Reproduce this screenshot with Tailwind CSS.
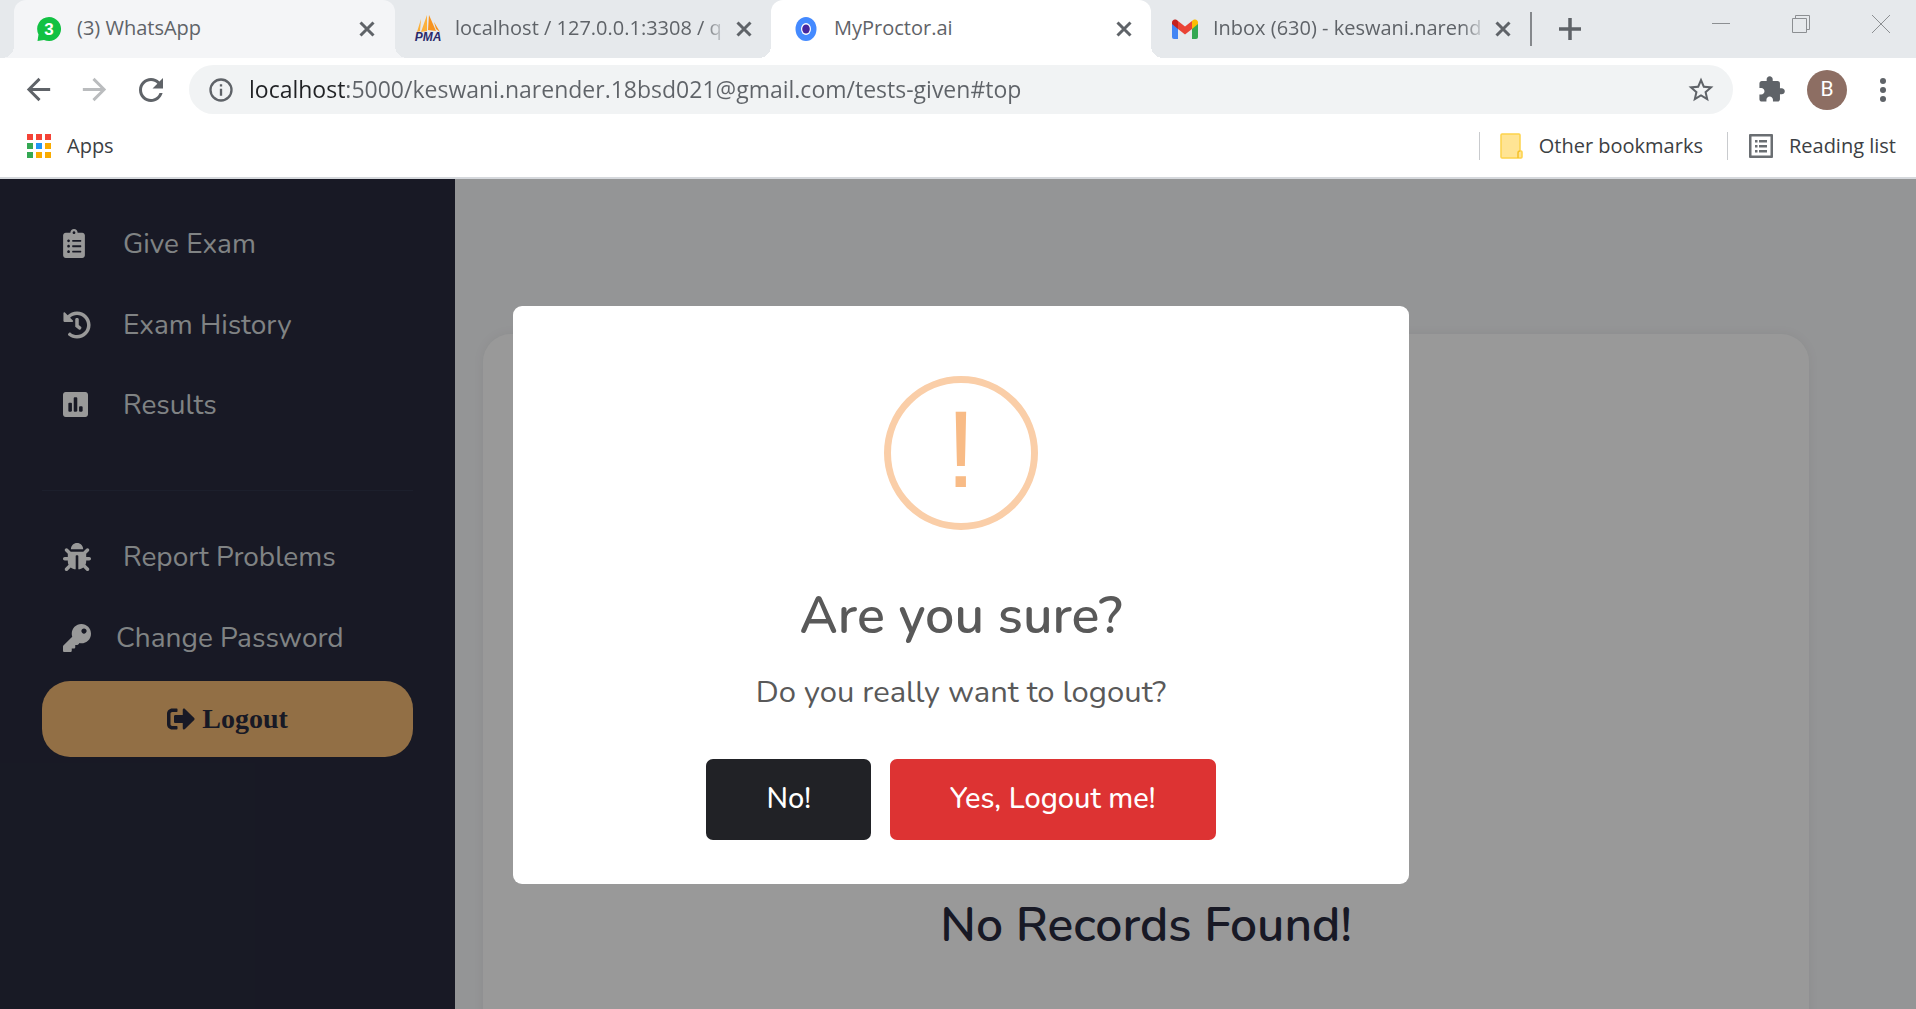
<!DOCTYPE html>
<html lang="en">
<head>
<meta charset="utf-8">
<meta name="viewport" content="width=device-width, initial-scale=1">
<title>MyProctor.ai</title>
<script src="https://cdn.jsdelivr.net/npm/@tailwindcss/browser@4"></script>
</head>
<body class="flex h-screen flex-col overflow-hidden bg-white font-['Nunito','Lato',sans-serif]">

<!-- Browser chrome -->
<header class="shrink-0 border-b-2 border-[#d5d8dc] font-['Segoe_UI','Open_Sans',sans-serif] text-[#5f6368]">

  <!-- Tab strip -->
  <div class="flex h-[58px] bg-[#e6e9ec] pl-[14px]">
    <div class="flex min-w-0 flex-1 text-[20px]">
      <div class="relative flex min-w-0 flex-[1_1_3px] items-center rounded-t-xl bg-[#f4f5f7] pr-[20px] pl-[22px] before:absolute before:bottom-0 before:-left-3 before:size-3 before:bg-[radial-gradient(circle_at_0_0,transparent_12px,#f4f5f7_12px)] after:absolute after:-right-3 after:bottom-0 after:size-3 after:bg-[radial-gradient(circle_at_100%_0,transparent_12px,#f4f5f7_12px)]">
        <span class="w-[41px] shrink-0">
          <svg class="h-[26px] w-[26px]" viewBox="0 0 26 26"><path fill="#12c143" d="M13 1a12 12 0 1 1-5 22.900L1.500 25l1-6.500A12 12 0 0 1 13 1z"/><text x="13" y="19" text-anchor="middle" font-family="Liberation Sans" font-weight="700" font-size="17" fill="#fff">3</text></svg>
        </span>
        <span class="min-w-0 flex-1 overflow-hidden pb-0.5 whitespace-nowrap">(3) WhatsApp</span>
        <button class="ml-4 shrink-0" aria-label="Close tab"><svg class="size-4" viewBox="0 0 16 16" fill="none" stroke="#5f6368" stroke-width="3"><path d="M1.500 1.500l13 13M14.500 1.500l-13 13"/></svg></button>
      </div>
      <div class="flex min-w-0 flex-[1_1_3px] items-center pr-[19px] pl-[18px]">
        <span class="w-[42px] shrink-0">
          <svg class="h-[30px] w-[30px]" viewBox="0 0 30 30"><path fill="#fbb03b" d="M8 5L4 18l3-1zM14 1v16l-6 1z"/><path fill="#f7931e" d="M16 1l7 16-8-1zM21 8l6 10-4-3z"/><text x="15" y="27" text-anchor="middle" font-family="Liberation Sans" font-weight="700" font-style="italic" font-size="12" fill="#2b2a6b">PMA</text></svg>
        </span>
        <span class="min-w-0 flex-1 overflow-hidden pb-0.5 whitespace-nowrap [mask-image:linear-gradient(to_right,black_calc(100%-26px),transparent)]">localhost / 127.0.0.1:3308 / q</span>
        <button class="ml-2 shrink-0" aria-label="Close tab"><svg class="size-4" viewBox="0 0 16 16" fill="none" stroke="#5f6368" stroke-width="3"><path d="M1.500 1.500l13 13M14.500 1.500l-13 13"/></svg></button>
      </div>
      <div class="relative flex min-w-0 flex-1 items-center rounded-t-xl bg-white pr-[19px] pl-[22px] before:absolute before:bottom-0 before:-left-3 before:size-3 before:bg-[radial-gradient(circle_at_0_0,transparent_12px,white_12px)] after:absolute after:-right-3 after:bottom-0 after:size-3 after:bg-[radial-gradient(circle_at_100%_0,transparent_12px,white_12px)]">
        <span class="w-[41px] shrink-0">
          <svg class="h-[26px] w-[26px]" viewBox="0 0 26 26"><ellipse cx="13" cy="13" rx="10.500" ry="12" fill="#448aff"/><ellipse cx="13" cy="13" rx="5" ry="6" fill="#fff"/><ellipse cx="13" cy="13" rx="3.800" ry="4.500" fill="#4527a0"/></svg>
        </span>
        <span class="min-w-0 flex-1 overflow-hidden pb-0.5 whitespace-nowrap">MyProctor.ai</span>
        <button class="ml-4 shrink-0" aria-label="Close tab"><svg class="size-4" viewBox="0 0 16 16" fill="none" stroke="#5f6368" stroke-width="3"><path d="M1.500 1.500l13 13M14.500 1.500l-13 13"/></svg></button>
      </div>
      <div class="flex min-w-0 flex-1 items-center pr-[19px] pl-[21px]">
        <span class="w-[41px] shrink-0">
          <svg class="h-[20px] w-[26px]" viewBox="0 0 26 20"><path fill="#4285f4" d="M0 4l6 4v12H2a2 2 0 0 1-2-2z"/><path fill="#34a853" d="M20 8l6-4v14a2 2 0 0 1-2 2h-4z"/><path fill="#fbbc04" d="M20 2c3-3 6-1 6 1.500V5l-6 5z"/><path fill="#ea4335" d="M6 2l7 5.500L20 2v8l-7 5.500L6 10z"/><path fill="#c5221f" d="M0 3.500C0 1 3-1 6 2v8L0 5z"/></svg>
        </span>
        <span class="min-w-0 flex-1 overflow-hidden pb-0.5 whitespace-nowrap [mask-image:linear-gradient(to_right,black_calc(100%-26px),transparent)]">Inbox (630) - keswani.narend</span>
        <button class="ml-2 shrink-0" aria-label="Close tab"><svg class="size-4" viewBox="0 0 16 16" fill="none" stroke="#5f6368" stroke-width="3"><path d="M1.500 1.500l13 13M14.500 1.500l-13 13"/></svg></button>
      </div>
    </div>
    <div class="flex w-[386px] shrink-0 items-center">
      <span class="h-[34px] w-[2px] bg-[#85888c]"></span>
      <button class="ml-[27px]" aria-label="New tab"><svg class="size-[22px]" viewBox="0 0 22 22" stroke="#5f6368" stroke-width="3.500"><path d="M11 0v22M0 11h22"/></svg></button>
      <div class="mr-[25px] mb-[10px] ml-auto flex items-center gap-[60px]">
        <button aria-label="Minimize"><svg class="size-5" viewBox="0 0 20 20" stroke="#8c8f92"><path d="M1 9.500h18"/></svg></button>
        <button aria-label="Restore"><svg class="size-5" viewBox="0 0 20 20" fill="none" stroke="#8c8f92"><path d="M1.500 4.500h14v14h-14zM4.500 4.500v-3h14v14h-3"/></svg></button>
        <button aria-label="Close"><svg class="size-5" viewBox="0 0 20 20" stroke="#8c8f92"><path d="M1 1l18 18M19 1L1 19"/></svg></button>
      </div>
    </div>
  </div>

  <!-- Toolbar -->
  <div class="flex h-[63px] items-center pr-[16px] pl-[21px]">
    <button aria-label="Back"><svg class="size-[35px]" viewBox="0 0 24 24" fill="#5f6368"><path d="M20 11H7.830l5.590-5.590L12 4l-8 8 8 8 1.410-1.410L7.830 13H20v-2z"/></svg></button>
    <button class="ml-[21px]" aria-label="Forward"><svg class="size-[35px]" viewBox="0 0 24 24" fill="#babcbe"><path d="M4 13h12.170l-5.590 5.590L12 20l8-8-8-8-1.410 1.410L16.170 11H4v2z"/></svg></button>
    <button class="ml-[21px]" aria-label="Reload"><svg class="size-[36px]" viewBox="0 0 24 24" fill="#5f6368"><path d="M17.650 6.350C16.200 4.900 14.210 4 12 4c-4.420 0-7.990 3.580-7.990 8s3.570 8 7.990 8c3.730 0 6.840-2.550 7.730-6h-2.080c-.82 2.330-3.040 4-5.650 4-3.310 0-6-2.690-6-6s2.690-6 6-6c1.660 0 3.140.69 4.220 1.780L13 11h7V4l-2.350 2.350z"/></svg></button>
    <div class="ml-5 flex h-[49px] min-w-0 flex-1 items-center rounded-full bg-[#f1f3f4] pr-[17px] pl-[18px]">
      <svg class="size-[28px] shrink-0" viewBox="0 0 24 24" fill="#5f6368"><path d="M11 7h2v2h-2zM11 11h2v6h-2z"/><circle cx="12" cy="12" r="9" fill="none" stroke="#5f6368" stroke-width="2"/></svg>
      <input type="text" aria-label="Address" value="localhost:5000/keswani.narender.18bsd021@gmail.com/tests-given#top" class="ml-[14px] h-full min-w-0 flex-1 bg-[linear-gradient(to_right,#202124_97px,#5f6368_97px)] bg-clip-text pb-0.5 text-[23px] text-transparent outline-none">
      <button class="ml-3 shrink-0" aria-label="Bookmark this tab"><svg class="size-[30px]" viewBox="0 0 24 24" fill="#5f6368"><path d="M22 9.240l-7.190-.62L12 2 9.190 8.630 2 9.240l5.460 4.730L5.820 21 12 17.270 18.180 21l-1.630-7.030L22 9.240zM12 15.400l-3.760 2.270 1-4.280-3.320-2.880 4.380-.38L12 6.100l1.710 4.040 4.380.38-3.320 2.880 1 4.280L12 15.400z"/></svg></button>
    </div>
    <button class="ml-6" aria-label="Extensions"><svg class="size-[29px]" viewBox="0 0 24 24" fill="#5f6368"><path d="M20.500 11H19V7c0-1.100-.9-2-2-2h-4V3.500C13 2.120 11.880 1 10.500 1S8 2.120 8 3.500V5H4c-1.100 0-1.990.9-1.990 2v3.800H3.500c1.490 0 2.700 1.210 2.700 2.700s-1.210 2.700-2.700 2.700H2V20c0 1.100.9 2 2 2h3.800v-1.500c0-1.490 1.210-2.700 2.700-2.700 1.490 0 2.700 1.210 2.700 2.700V22H17c1.100 0 2-.9 2-2v-4h1.500c1.380 0 2.500-1.120 2.500-2.500S21.880 11 20.500 11z"/></svg></button>
    <button class="ml-[21px] flex size-10 items-center justify-center rounded-full bg-[#8d6e63] font-['Roboto',sans-serif] text-[21px] text-white" aria-label="Profile">B</button>
    <button class="ml-[19px]" aria-label="Menu"><svg class="size-[34px]" viewBox="0 0 34 34" fill="#5f6368"><circle cx="17" cy="8" r="3"/><circle cx="17" cy="17" r="3"/><circle cx="17" cy="26" r="3"/></svg></button>
  </div>

  <!-- Bookmarks bar -->
  <div class="flex h-[56px] items-center pr-[20px] pb-[6px] pl-[27px] text-[20px] text-[#3c4043]">
    <a href="#" class="flex items-center gap-4">
      <svg class="size-6" viewBox="0 0 24 24"><path fill="#f44336" d="M0 0h6v6H0zM9 0h6v6H9zM18 0h6v6h-6z"/><path fill="#34a853" d="M0 9h6v6H0zM0 18h6v6H0z"/><path fill="#2196f3" d="M9 9h6v6H9z"/><path fill="#f9ab00" d="M18 9h6v6h-6zM9 18h6v6H9zM18 18h6v6h-6z"/></svg>
      Apps
    </a>
    <span class="ml-auto h-[28px] w-px bg-[#c9cbce]"></span>
    <a href="#" class="ml-5 flex items-center gap-4">
      <svg class="h-[26px] w-[23px]" viewBox="0 0 23 26"><path fill="#ffe494" stroke="#fdd24b" stroke-width="1.500" d="M1 2q0-1 1-1h17q1 0 1 1v16h1q1 0 1 1v5q0 1-1 1H2q-1 0-1-1z"/><path fill="none" stroke="#f5c028" stroke-width="1.500" d="M20 18q-2 0-2 2v5"/></svg>
      Other bookmarks
    </a>
    <span class="ml-6 h-[28px] w-px bg-[#c9cbce]"></span>
    <button class="ml-5 flex items-center gap-[15px]">
      <svg class="h-[26px] w-[26px]" viewBox="0 0 26 26" fill="#6a6e72"><path fill-rule="evenodd" d="M2 1h22q1 0 1 1v22q0 1-1 1H2q-1 0-1-1V2q0-1 1-1zM3.500 3.500v19h19v-19z"/><path d="M7 7h2.500v2.500H7zM11 7h8v2.500h-8zM7 12h2.500v2.500H7zM11 12h8v2.500h-8zM7 17h2.500v2.500H7zM11 17h8v2.500h-8z"/></svg>
      Reading list
    </button>
  </div>
</header>

<!-- Page -->
<div class="relative flex min-h-0 flex-1 bg-[#f7f8fa]">
  <nav class="w-[455px] shrink-0 bg-[#282b3e] px-[42px] pt-[24px] text-[28px] text-[#d5dadd]">
    <a href="#" class="flex h-[81px] items-center pl-[21px]"><svg class="mr-[38px] h-[29px] w-[22px]" viewBox="0 0 384 512" fill="#fff"><path d="M336 64h-80c0-35.300-28.700-64-64-64s-64 28.700-64 64H48C21.500 64 0 85.500 0 112v352c0 26.500 21.500 48 48 48h288c26.500 0 48-21.500 48-48V112c0-26.500-21.500-48-48-48zM96 424c-13.300 0-24-10.700-24-24s10.700-24 24-24 24 10.700 24 24-10.700 24-24 24zm0-96c-13.300 0-24-10.700-24-24s10.700-24 24-24 24 10.700 24 24-10.700 24-24 24zm0-96c-13.300 0-24-10.700-24-24s10.700-24 24-24 24 10.700 24 24-10.700 24-24 24zm96-192c13.300 0 24 10.700 24 24s-10.700 24-24 24-24-10.700-24-24 10.700-24 24-24zm128 368c0 4.400-3.600 8-8 8H168c-4.400 0-8-3.600-8-8v-16c0-4.400 3.600-8 8-8h144c4.400 0 8 3.600 8 8v16zm0-96c0 4.400-3.600 8-8 8H168c-4.400 0-8-3.600-8-8v-16c0-4.400 3.600-8 8-8h144c4.400 0 8 3.600 8 8v16zm0-96c0 4.400-3.600 8-8 8H168c-4.400 0-8-3.600-8-8v-16c0-4.400 3.600-8 8-8h144c4.400 0 8 3.600 8 8v16z"/></svg>Give Exam</a>
    <a href="#" class="flex h-[81px] items-center pl-[21px]"><svg class="mr-[32px] size-7" viewBox="0 0 512 512" fill="#fff"><path d="M504 255.531c.253 136.640-111.180 248.372-247.820 248.468-59.015.042-113.223-20.530-155.822-54.911-11.077-8.940-11.905-25.541-1.839-35.607l11.267-11.267c8.609-8.609 22.353-9.551 31.891-1.984C173.062 425.135 212.781 440 256 440c101.705 0 184-82.311 184-184 0-101.705-82.311-184-184-184-48.814 0-93.149 18.969-126.068 49.932l50.754 50.754c10.080 10.080 2.941 27.314-11.313 27.314H24c-8.837 0-16-7.163-16-16V38.627c0-14.254 17.234-21.393 27.314-11.314l49.372 49.372C129.209 34.136 189.552 8 256 8c136.810 0 247.747 110.780 248 247.531zm-180.912 78.784l9.823-12.630c8.138-10.463 6.253-25.542-4.210-33.679L288 256.349V152c0-13.255-10.745-24-24-24h-16c-13.255 0-24 10.745-24 24v135.651l65.409 50.874c10.463 8.137 25.541 6.253 33.679-4.210z"/></svg>Exam History</a>
    <a href="#" class="flex h-[79px] items-center pl-[21px]"><svg class="mr-[35px] h-[29px] w-[25px]" viewBox="0 0 448 512" fill="#fff"><path d="M400 32H48C21.500 32 0 53.500 0 80v352c0 26.500 21.500 48 48 48h352c26.500 0 48-21.500 48-48V80c0-26.500-21.500-48-48-48zM160 368c0 8.840-7.160 16-16 16h-32c-8.840 0-16-7.160-16-16V240c0-8.840 7.160-16 16-16h32c8.840 0 16 7.160 16 16v128zm96 0c0 8.840-7.160 16-16 16h-32c-8.840 0-16-7.160-16-16V144c0-8.840 7.160-16 16-16h32c8.840 0 16 7.160 16 16v224zm96 0c0 8.840-7.160 16-16 16h-32c-8.840 0-16-7.160-16-16v-64c0-8.840 7.160-16 16-16h32c8.840 0 16 7.160 16 16v64z"/></svg>Results</a>
    <hr class="mt-[46px] mb-[25px] border-[#30344a]">
    <a href="#" class="flex h-[81px] items-center pl-[21px]"><svg class="mr-[32px] size-7" viewBox="0 0 512 512" fill="#fff"><path d="M511.988 288.900c-.478 17.430-15.217 31.100-32.653 31.100H424v16c0 21.864-4.882 42.584-13.600 61.145l60.228 60.228c12.496 12.497 12.496 32.758 0 45.255-12.498 12.497-32.759 12.496-45.256 0l-54.736-54.736C345.886 467.965 314.351 480 280 480V236c0-6.627-5.373-12-12-12h-24c-6.627 0-12 5.373-12 12v244c-34.351 0-65.886-12.035-90.636-32.108l-54.736 54.736c-12.498 12.497-32.759 12.496-45.256 0-12.496-12.497-12.496-32.758 0-45.255l60.228-60.228C92.882 378.584 88 357.864 88 336v-16H32.666C15.230 320 .491 306.330.013 288.900-.484 270.816 14.028 256 32 256h56v-58.745l-46.628-46.628c-12.496-12.497-12.496-32.758 0-45.255 12.498-12.497 32.758-12.497 45.256 0L141.255 160h229.489l54.627-54.627c12.498-12.497 32.758-12.497 45.256 0 12.496 12.497 12.496 32.758 0 45.255L424 197.255V256h56c17.972 0 32.484 14.816 31.988 32.900zM257 0c-61.856 0-112 50.144-112 112h224C369 50.144 318.856 0 257 0z"/></svg>Report Problems</a>
    <a href="#" class="flex h-[81px] items-center pl-[21px]"><svg class="mr-[25px] size-7" viewBox="0 0 512 512" fill="#fff"><path d="M512 176.001C512 273.203 433.202 352 336 352c-11.220 0-22.190-1.062-32.827-3.069l-24.012 27.014A23.999 23.999 0 0 1 261.223 384H224v40c0 13.255-10.745 24-24 24h-40v40c0 13.255-10.745 24-24 24H24c-13.255 0-24-10.745-24-24v-78.059c0-6.365 2.529-12.470 7.029-16.971l161.802-161.802C163.108 213.814 160 195.271 160 176 160 78.798 238.797.001 335.999 0 433.488-.001 512 78.511 512 176.001zM336 128c0 26.510 21.490 48 48 48s48-21.490 48-48-21.490-48-48-48-48 21.490-48 48z"/></svg>Change Password</a>
    <button class="mt-[3px] flex h-[76px] w-full items-center justify-center gap-[7px] rounded-[28px] bg-[#f3b973] font-['Liberation_Serif',serif] text-[28px] font-bold text-[#282b3e]"><svg class="size-7" viewBox="0 0 512 512" fill="#282b3e"><path d="M497 273L329 441c-15 15-41 4.500-41-17v-96H152c-13.300 0-24-10.700-24-24v-96c0-13.300 10.700-24 24-24h136V88c0-21.400 25.900-32 41-17l168 168c9.300 9.400 9.300 24.600 0 34zM192 436v-40c0-6.600-5.400-12-12-12H96c-17.700 0-32-14.300-32-32V160c0-17.700 14.300-32 32-32h84c6.600 0 12-5.400 12-12V76c0-6.600-5.400-12-12-12H96c-53 0-96 43-96 96v192c0 53 43 96 96 96h84c6.600 0 12-5.400 12-12z"/></svg>Logout</button>
  </nav>
  <main class="flex min-w-0 flex-1 flex-col overflow-hidden pt-[155px] pr-[107px] pl-[28px]">
    <section class="flex min-h-[800px] shrink-0 flex-col items-center rounded-[28px] bg-white pt-[558px] shadow-[0_0_12px_rgba(0,0,0,0.06)]">
      <h2 class="text-[48px] leading-[66px] font-semibold text-[#282b3e]">No Records Found!</h2>
    </section>
  </main>

  <!-- Logout confirmation -->
  <div class="absolute inset-0 flex items-center justify-center bg-black/40 pt-[2px] pl-[6px]">
    <div role="dialog" aria-modal="true" aria-labelledby="dialog-title" class="flex w-[896px] flex-col items-center rounded-[9px] bg-white px-9 pt-[70px] pb-[44px] text-[#595959]">
      <div class="flex size-[154px] items-center justify-center rounded-full border-[7px] border-[#facea8] pb-2 font-['Liberation_Sans',sans-serif] text-[109px] leading-none text-[#f8bb86]">!</div>
      <h1 id="dialog-title" class="mt-[53px] text-[52px] leading-[66px] font-semibold">Are you sure?</h1>
      <p class="mt-[21px] text-[31px] leading-[44px]">Do you really want to logout?</p>
      <div class="mt-[45px] flex gap-[19px]">
        <button class="h-[81px] rounded-[7px] bg-[#212226] px-[60px] pb-0.5 text-[29px] font-medium text-white">No!</button>
        <button class="h-[81px] rounded-[7px] bg-[#dd3333] px-[60px] pb-0.5 text-[29px] font-medium text-white">Yes, Logout me!</button>
      </div>
    </div>
  </div>
</div>
</body>
</html>
